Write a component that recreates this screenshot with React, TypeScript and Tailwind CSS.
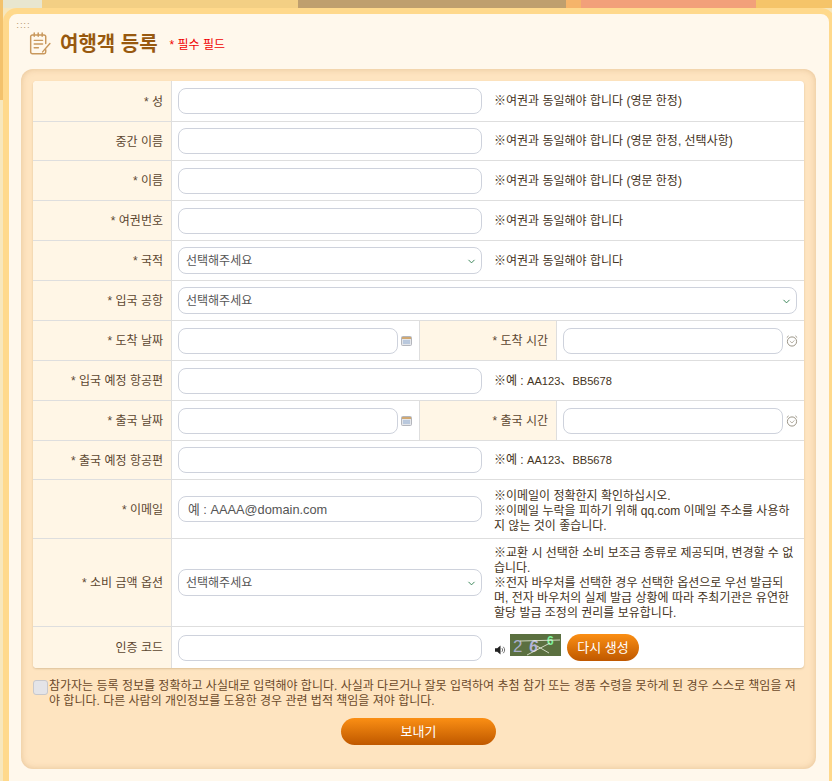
import { ChevronDown } from 'lucide-react'
import type { ReactNode } from 'react'

const font = 'font-["Liberation_Sans","Noto_Sans_CJK_KR",sans-serif]'

function Label({ children }: { children: ReactNode }) {
  return (
    <div className="w-[139px] shrink-0 flex items-center justify-end pr-2 pt-px bg-[#fff6e6] border-r border-[#dedede] text-[12px] text-[#5c4630]">
      {children}
    </div>
  )
}

function TextInput({ width = 'w-[304px]', placeholder }: { width?: string; placeholder?: string }) {
  return (
    <input
      placeholder={placeholder}
      className={`${width} h-[26px] shrink-0 rounded-lg border border-[#ced2dc] bg-white px-[9px] text-[12.8px] text-[#444] placeholder:text-[#555] outline-none`}
    />
  )
}

function SelectBox({ width = 'w-[304px]' }: { width?: string }) {
  return (
    <div className={`relative ${width} h-[27px] shrink-0`}>
      <select className="w-full h-full appearance-none rounded-lg border border-[#ced2dc] bg-white pl-[7px] text-[12px] text-[#555] outline-none">
        <option>선택해주세요</option>
      </select>
      <ChevronDown size={11} strokeWidth={2} className="absolute right-[5px] top-[9px] text-[#2d7d4d]" />
    </div>
  )
}

function Hint({ children, top = 'pt-px' }: { children: ReactNode; top?: string }) {
  return <div className={`min-w-0 pl-3 pr-2 ${top} text-[12px] leading-[15px] text-[#443322]`}>{children}</div>
}

function Row({ label, h, children }: { label: string; h: string; children: ReactNode }) {
  return (
    <div className={`flex ${h} border-b border-[#dedede]`}>
      <Label>{label}</Label>
      <div className="flex-1 min-w-0 flex items-center pl-[6px]">{children}</div>
    </div>
  )
}

function CalendarIcon() {
  return (
    <svg width="11" height="10" viewBox="0 0 11 10" className="ml-[3px] shrink-0">
      <rect x="0.5" y="0.5" width="10" height="9" rx="1" fill="#e4e6ea" stroke="#b4b6bc" />
      <rect x="1" y="1" width="9" height="2" fill="#d0a872" />
      <path d="M2 5h7M2 7h7" stroke="#8fabd0" strokeWidth="1" />
    </svg>
  )
}

function ClockIcon() {
  return (
    <svg width="12" height="12" viewBox="0 0 12 12" fill="none" className="ml-[3px] shrink-0">
      <circle cx="6" cy="6.5" r="4.6" stroke="#8e8878" strokeWidth="0.9" />
      <path d="M3.8 6 6 8l2.4-2.6" stroke="#a9a294" strokeWidth="0.8" />
      <path d="M0.8 2.6 2.6 0.9M11.2 2.6 9.4 0.9" stroke="#8e8878" strokeWidth="0.9" />
    </svg>
  )
}

function DateTimeRow({ dateLabel, timeLabel }: { dateLabel: string; timeLabel: string }) {
  return (
    <div className="flex h-[40px] border-b border-[#dedede]">
      <Label>{dateLabel}</Label>
      <div className="w-[247px] shrink-0 flex items-center pl-[6px]">
        <TextInput width="w-[220px]" />
        <CalendarIcon />
      </div>
      <div className="w-[138px] shrink-0 flex items-center justify-end pr-2 pt-px bg-[#fff6e6] border-x border-[#dedede] text-[12px] text-[#5c4630]">
        {timeLabel}
      </div>
      <div className="flex-1 min-w-0 flex items-center pl-[6px]">
        <TextInput width="w-[220px]" />
        <ClockIcon />
      </div>
    </div>
  )
}

function FlightHint() {
  return (
    <Hint>
      ※예 : <span className="text-[11.1px]">AA123</span>、<span className="text-[11.1px]">BB5678</span>
    </Hint>
  )
}

function Captcha() {
  return (
    <svg width="51" height="22" viewBox="0 0 51 22" className="ml-1 shrink-0">
      <rect width="51" height="22" fill="#5b7040" />
      <text x="3" y="18" fontFamily="Liberation Sans" fontSize="17" fill="#a9aecb">2</text>
      <text x="19" y="18" fontFamily="Liberation Sans" fontSize="16" fontWeight="700" fontStyle="italic" fill="#b4b4d6">6</text>
      <text x="37" y="11" fontFamily="Liberation Sans" fontSize="12" fontWeight="700" fill="#7df09a">6</text>
      <path d="M10 7 50 6M17 21 40 9M27 12 39 19" stroke="#eef3e2" strokeWidth="0.8" />
    </svg>
  )
}

function Sound() {
  return (
    <svg width="11" height="10" viewBox="0 0 12 10" className="shrink-0 mt-[11px]">
      <path d="M0 3h2.5L6 0v10L2.5 7H0z" fill="#222" />
      <path d="M7.5 3c1 1 1 3 0 4M9 1.5c2 2 2 5 0 7" stroke="#666" fill="none" />
    </svg>
  )
}

const orange = 'bg-gradient-to-b from-[#fb8f14] to-[#bf5800] text-white'

export default function App() {
  return (
    <div className={`relative w-[832px] h-[781px] overflow-hidden bg-[#f7e7bd] ${font}`}>
      {/* page background behind the card */}
      <div className="absolute inset-x-0 top-0 h-[8px] flex">
        <div className="w-[42px] bg-[#e8e6cf]" />
        <div className="w-[256px] bg-[#f3cf84]" />
        <div className="w-[268px] bg-[#bf9f6e]" />
        <div className="w-[15px] bg-[#f5b46a]" />
        <div className="w-[175px] bg-[#f2a07a]" />
        <div className="flex-1 bg-[#f5c469]" />
      </div>
      <div className="absolute left-0 top-0 w-[3px] h-[100px] bg-[#f3c26c]" />

      <div className="relative ml-[3px] mt-[8px] w-[832px] h-[790px] rounded-[14px] border-[6px] border-[#ffd98c] bg-[#fff8ec]">
        <div className="absolute left-[7px] top-[10px] w-[8px] h-[6px] text-[#a98a5c] leading-[3px] text-[7px] tracking-[0px]">
          ∷∷
        </div>
        <div className="flex items-center h-[55px] pl-[20px]">
          <svg width="23" height="23" viewBox="0 0 22 22" fill="none" stroke="#c9985c" strokeWidth="1.4" strokeLinecap="round" strokeLinejoin="round" className="mt-[3px]">
            <path d="M16 17v2.2a1.6 1.6 0 0 1-1.6 1.6H3.2a1.6 1.6 0 0 1-1.6-1.6V4.4a1.6 1.6 0 0 1 1.6-1.6h11.2A1.6 1.6 0 0 1 16 4.4V11" />
            <path d="M5 1v3M8.8 1v3M12.6 1v3M5 8h8M5 11.5h8M5 15h4M13 19l7-8" />
          </svg>
          <h1 className="ml-[8px] mt-[4px] text-[20px] font-bold text-[#98590f] leading-none">여행객 등록</h1>
          <span className="ml-[12px] mt-[6px] text-[12px] text-[#f00000]">* 필수 필드</span>
        </div>

        <div className="w-[795px] ml-[12px] h-[700px] rounded-[12px] bg-[#fee4c0] p-3 shadow-[inset_0_0_6px_rgba(180,130,70,0.35)]">
          <div className="rounded-[4px] overflow-hidden bg-white shadow-[0_1px_2px_rgba(120,90,40,0.25)]">
            <Row label="* 성" h="h-[41px]">
              <TextInput />
              <Hint>※여권과 동일해야 합니다 (영문 한정)</Hint>
            </Row>
            <Row label="중간 이름" h="h-[39px]">
              <TextInput />
              <Hint>※여권과 동일해야 합니다 (영문 한정, 선택사항)</Hint>
            </Row>
            <Row label="* 이름" h="h-[40px]">
              <TextInput />
              <Hint>※여권과 동일해야 합니다 (영문 한정)</Hint>
            </Row>
            <Row label="* 여권번호" h="h-[40px]">
              <TextInput />
              <Hint>※여권과 동일해야 합니다</Hint>
            </Row>
            <Row label="* 국적" h="h-[40px]">
              <SelectBox />
              <Hint>※여권과 동일해야 합니다</Hint>
            </Row>
            <Row label="* 입국 공항" h="h-[40px]">
              <SelectBox width="w-[619px]" />
            </Row>
            <DateTimeRow dateLabel="* 도착 날짜" timeLabel="* 도착 시간" />
            <Row label="* 입국 예정 항공편" h="h-[40px]">
              <TextInput />
              <FlightHint />
            </Row>
            <DateTimeRow dateLabel="* 출국 날짜" timeLabel="* 출국 시간" />
            <Row label="* 출국 예정 항공편" h="h-[39px]">
              <TextInput />
              <FlightHint />
            </Row>
            <Row label="* 이메일" h="h-[59px]">
              <TextInput placeholder="예 : AAAA@domain.com" />
              <Hint top="pt-[4px]">
                ※이메일이 정확한지 확인하십시오.
                <br />
                ※이메일 누락을 피하기 위해 qq.com 이메일 주소를 사용하지 않는 것이 좋습니다.
              </Hint>
            </Row>
            <Row label="* 소비 금액 옵션" h="h-[88px]">
              <SelectBox />
              <Hint top="pt-[2px]">
                ※교환 시 선택한 소비 보조금 종류로 제공되며, 변경할 수 없습니다.
                <br />
                ※전자 바우처를 선택한 경우 선택한 옵션으로 우선 발급되며, 전자 바우처의 실제 발급 상황에 따라 주최기관은 유연한 할당 발급 조정의 권리를 보유합니다.
              </Hint>
            </Row>
            <div className="flex h-[41px]">
              <Label>인증 코드</Label>
              <div className="flex-1 flex items-center pl-[6px]">
                <TextInput />
                <div className="ml-[13px] flex items-start">
                  <Sound />
                  <Captcha />
                  <button className={`ml-[6px] w-[72px] h-[27px] rounded-full text-[13px] ${orange}`}>다시 생성</button>
                </div>
              </div>
            </div>
          </div>

          <div className="mt-[11px] flex items-start">
            <input
              type="checkbox"
              disabled
              className="appearance-none w-[15px] h-[15px] mt-px shrink-0 rounded-[3px] border border-[#c8c8cc] bg-[#e4e4e8]"
            />
            <p className="pl-px text-[12px] leading-[15px] text-[#6b4a2a]">
              참가자는 등록 정보를 정확하고 사실대로 입력해야 합니다. 사실과 다르거나 잘못 입력하여 추첨 참가 또는 경품 수령을 못하게 된 경우 스스로 책임을 져야 합니다. 다른 사람의 개인정보를 도용한 경우 관련 법적 책임을 져야 합니다.
            </p>
          </div>
          <div className="mt-[9px] flex justify-center">
            <button className={`w-[155px] h-[27px] rounded-full text-[13px] ${orange}`}>보내기</button>
          </div>
        </div>
      </div>
    </div>
  )
}
